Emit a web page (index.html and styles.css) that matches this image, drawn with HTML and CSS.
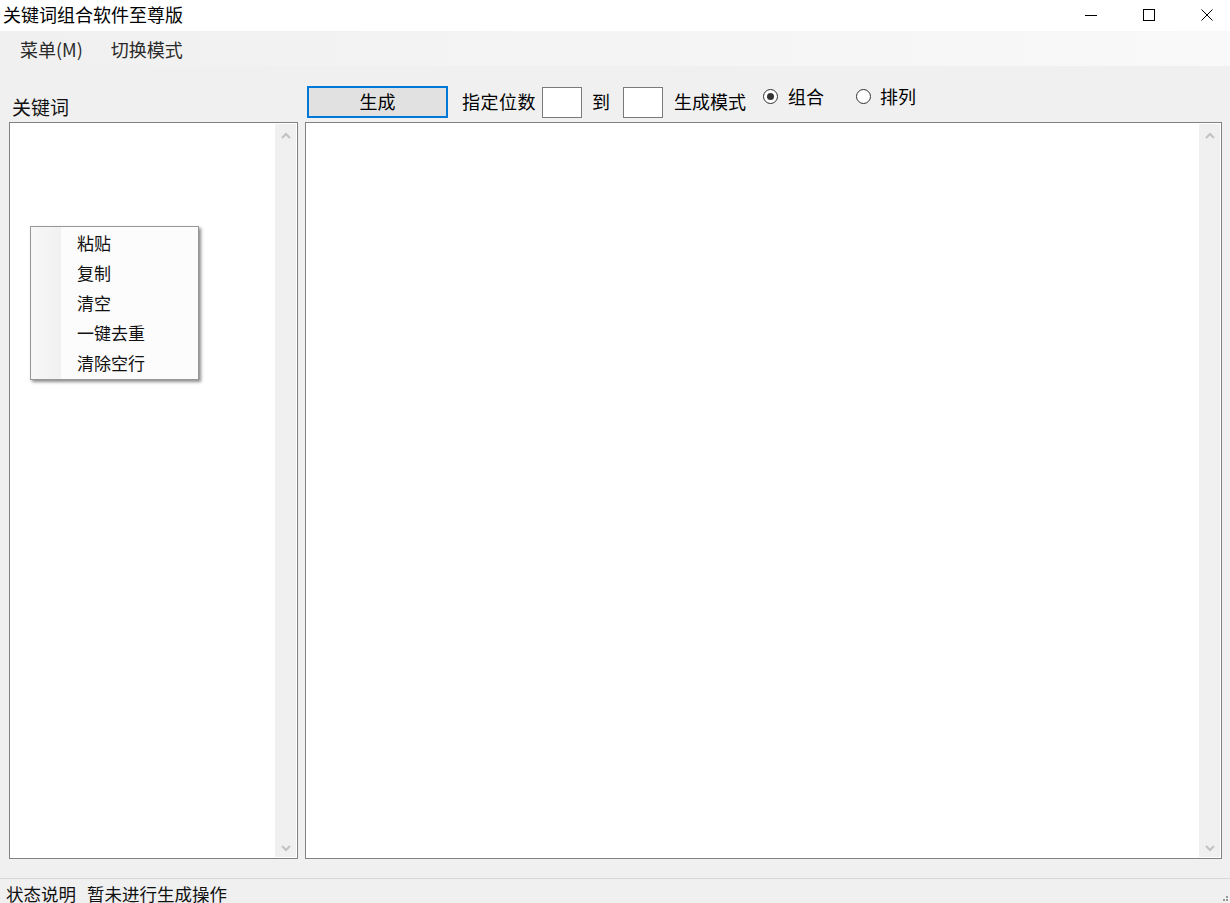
FILE: index.html
```html
<!DOCTYPE html>
<html lang="zh">
<head>
<meta charset="utf-8">
<title>关键词组合软件至尊版</title>
<link rel="stylesheet" href="styles.css">
</head>
<body>
<div class="window">
  <div class="titlebar">
    <div class="title">关键词组合软件至尊版</div>
    <div class="controls">
      <div class="ctl"><svg width="14" height="14" viewBox="0 0 14 14"><path d="M1 7.5H13" stroke="#000" stroke-width="1"/></svg></div>
      <div class="ctl"><svg width="14" height="14" viewBox="0 0 14 14"><rect x="1.5" y="1.5" width="11" height="11" fill="none" stroke="#000" stroke-width="1"/></svg></div>
      <div class="ctl"><svg width="14" height="14" viewBox="0 0 14 14"><path d="M1.5 1.5L12.5 12.5M12.5 1.5L1.5 12.5" stroke="#000" stroke-width="1"/></svg></div>
    </div>
  </div>
  <div class="menubar">
    <span class="menuitem">菜单(M)</span>
    <span class="menuitem">切换模式</span>
  </div>
  <div class="main">
    <div class="leftcol">
      <div class="label">关键词</div>
      <div class="textbox">
        <div class="content"></div>
        <div class="scrollbar">
          <svg width="10" height="8" viewBox="0 0 10 8"><path d="M1 6L5 2L9 6" fill="none" stroke="#c2c2c2" stroke-width="2"/></svg>
          <svg width="10" height="8" viewBox="0 0 10 8"><path d="M1 2L5 6L9 2" fill="none" stroke="#c2c2c2" stroke-width="2"/></svg>
        </div>
      </div>
    </div>
    <div class="rightcol">
      <div class="toolbar">
        <button class="btn">生成</button>
        <span class="txt t1">指定位数</span>
        <span class="input"></span>
        <span class="txt t2">到</span>
        <span class="input"></span>
        <span class="txt t3">生成模式</span>
        <span class="radio checked"></span>
        <span class="txt rlabel t4">组合</span>
        <span class="radio r2"></span>
        <span class="txt rlabel t5">排列</span>
      </div>
      <div class="textbox">
        <div class="content"></div>
        <div class="scrollbar">
          <svg width="10" height="8" viewBox="0 0 10 8"><path d="M1 6L5 2L9 6" fill="none" stroke="#c2c2c2" stroke-width="2"/></svg>
          <svg width="10" height="8" viewBox="0 0 10 8"><path d="M1 2L5 6L9 2" fill="none" stroke="#c2c2c2" stroke-width="2"/></svg>
        </div>
      </div>
    </div>
  </div>
  <div class="statusbar">
    <span>状态说明</span><span class="status-msg">暂未进行生成操作</span>
  </div>
  <div class="grip"><i></i><i></i><i></i></div>
  <div class="ctxmenu">
    <div class="gutter"></div>
    <ul>
      <li>粘贴</li>
      <li>复制</li>
      <li>清空</li>
      <li>一键去重</li>
      <li>清除空行</li>
    </ul>
  </div>
</div>
</body>
</html>
```
FILE: styles.css
```css
* { box-sizing: border-box; }
html, body { margin: 0; padding: 0; }
body {
  width: 1230px;
  height: 903px;
  overflow: hidden;
  background: #f0f0f0;
  font-family: "Noto Sans CJK SC", "Microsoft YaHei", sans-serif;
  color: #000;
}
.window { position: relative; width: 1230px; height: 903px; overflow: hidden; }
.titlebar {
  height: 31px;
  background: #fff;
  display: flex;
  align-items: center;
  justify-content: space-between;
}
.title { font-size: 18px; padding-left: 3px; line-height: 31px; margin-top: -2px; }
.controls { display: flex; height: 31px; margin-right: -6px; }
.ctl { width: 58px; display: flex; align-items: center; justify-content: center; padding-bottom: 1px; }
.menubar {
  height: 35px;
  background: linear-gradient(to right, #f0f0f0 0%, #f2f2f2 25%, #f9f9f9 100%);
  display: flex;
  align-items: center;
  padding-left: 20px;
  font-size: 18px;
  color: #2a2a2a;
}
.menuitem { margin-right: 28px; line-height: 35px; margin-top: 1px; }
.main { display: flex; height: 793px; }
.leftcol { width: 298px; padding-left: 9px; display: flex; flex-direction: column; }
.label { height: 56px; font-size: 19px; display: flex; align-items: flex-end; padding-left: 3px; padding-bottom: 3px; color: #111; line-height: 24px; }
.rightcol { width: 917px; margin-left: 7px; display: flex; flex-direction: column; }
.toolbar { height: 56px; display: flex; align-items: center; padding-top: 16px; font-size: 18px; }
.textbox {
  height: 737px;
  background: #fff;
  border: 1px solid #828282;
  display: flex;
}
.content { flex: 1; }
.scrollbar {
  width: 21px;
  background: #f0f0f0;
  margin: 1px 1px 1px 0;
  display: flex;
  flex-direction: column;
  justify-content: space-between;
  align-items: center;
  padding: 8px 0 5px;
}
.btn {
  width: 141px;
  height: 32px;
  margin-left: 2px;
  background: #e1e1e1;
  border: 2px solid #0078d7;
  font-family: inherit;
  font-size: 18px;
  padding: 0 0 2px;
  color: #000;
}
.txt { white-space: nowrap; line-height: 24px; position: relative; top: -1px; }
.t1 { margin-left: 14px; letter-spacing: 0.5px; }
.t2 { margin-left: 10px; margin-right: 7px; }
.t3 { margin-left: 11px; }
.rlabel { top: -6px; }
.t4 { margin-left: 10px; }
.t5 { margin-left: 9px; }
.input { width: 40px; height: 31px; background: #fff; border: 1px solid #7a7a7a; margin-left: 6px; }
.radio {
  width: 15px; height: 15px; border: 1px solid #333; border-radius: 50%;
  margin-left: 17px; background: #fff; position: relative; top: -6px;
}
.radio.r2 { margin-left: 32px; }
.radio.checked::after {
  content: ""; position: absolute; left: 3px; top: 3px; width: 7px; height: 7px;
  border-radius: 50%; background: #333;
}
.statusbar {
  margin-top: 19px;
  border-top: 1px solid #d7d7d7;
  padding: 3px 0 0 6px;
  font-size: 17.5px;
  color: #111;
  line-height: 24px;
}
.status-msg { margin-left: 11px; }
.grip { position: absolute; right: 2px; bottom: 2px; width: 6px; height: 6px; }
.grip i { position: absolute; width: 2px; height: 2px; background: #999; }
.grip i:nth-child(1) { right: 0; bottom: 0; }
.grip i:nth-child(2) { right: 3px; bottom: 0; }
.grip i:nth-child(3) { right: 0; bottom: 3px; }
.ctxmenu {
  position: absolute;
  left: 30px; top: 226px;
  width: 169px; height: 154px;
  background: #fcfcfc;
  border: 1px solid #979797;
  box-shadow: 2px 2px 3px rgba(0,0,0,0.45);
  display: flex;
}
.gutter { width: 30px; background: linear-gradient(to right, #f7f7f7, #f1f1f1); }
.ctxmenu ul { list-style: none; margin: 0; padding: 1px 0 0 16px; font-size: 17px; color: #111; }
.ctxmenu li { height: 30px; line-height: 30px; }
```
